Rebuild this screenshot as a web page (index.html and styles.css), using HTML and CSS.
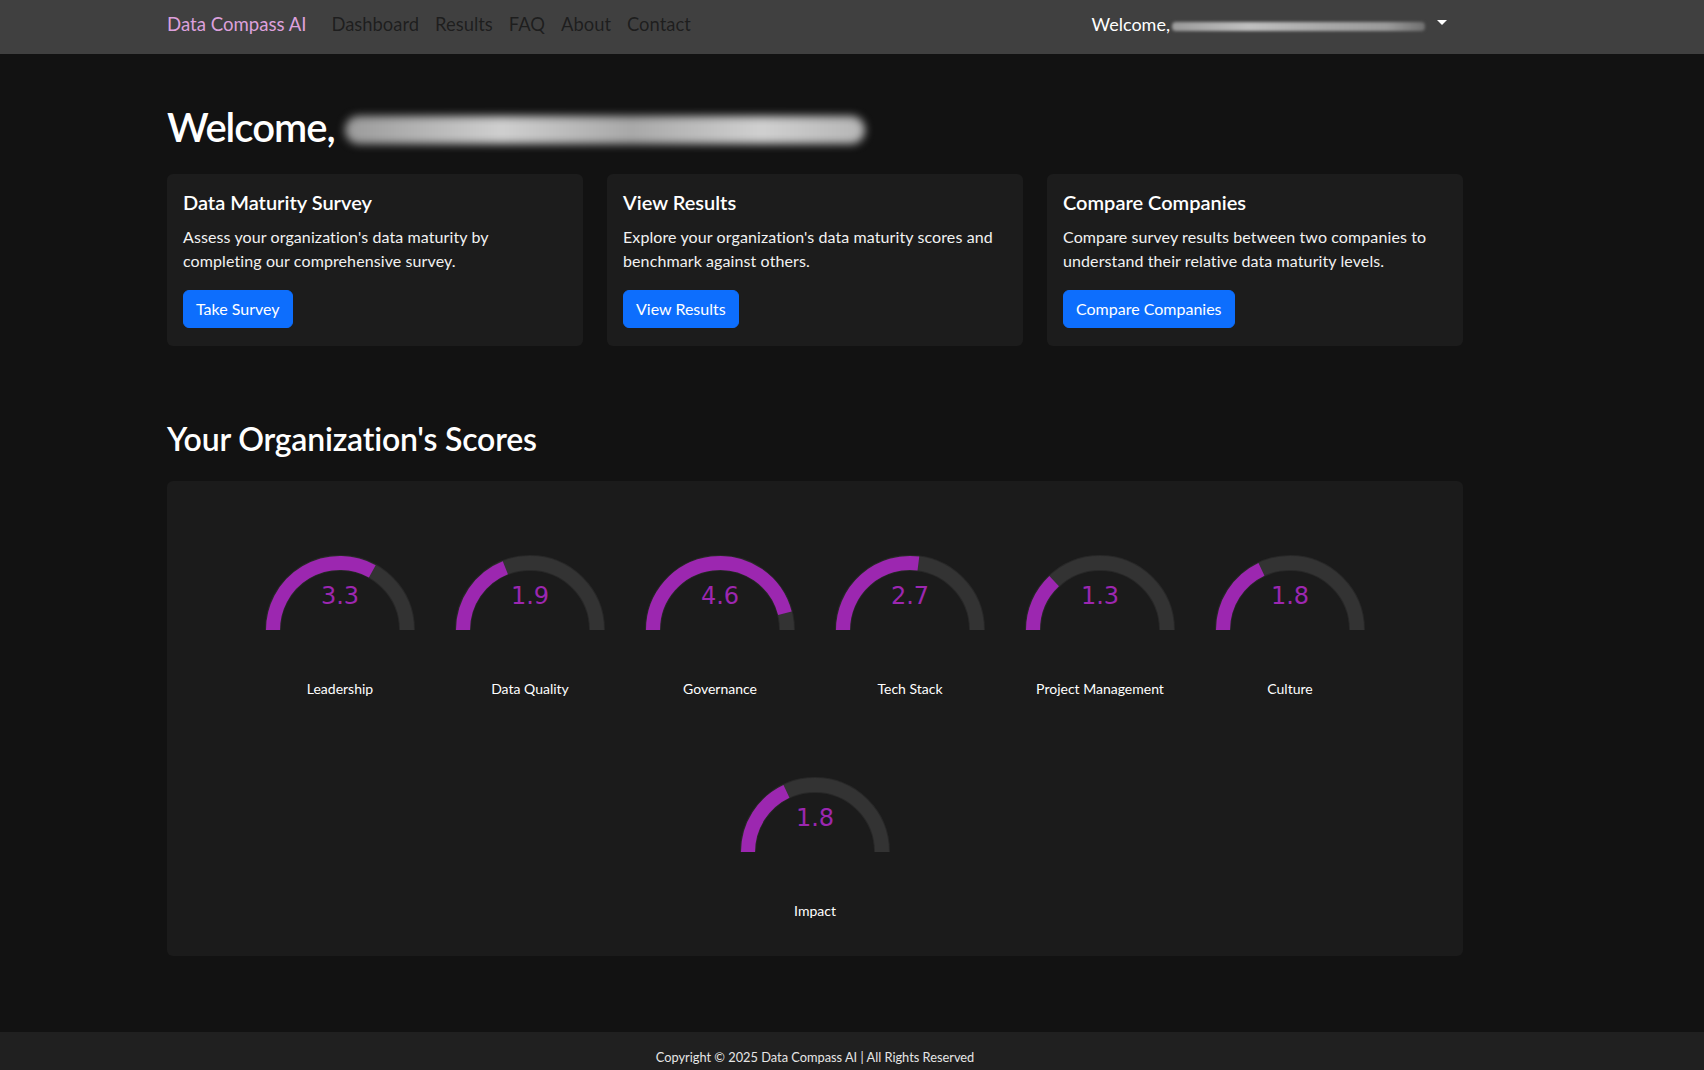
FILE: index.html
```html
<!DOCTYPE html>
<html lang="en">
<head>
<meta charset="utf-8">
<title>Data Compass AI - Dashboard</title>
<link rel="stylesheet" href="styles.css">
</head>
<body>
<nav class="navbar">
  <div class="wrap nav-inner">
    <a class="brand" href="#">Data Compass AI</a>
    <ul class="nav-links">
      <li><a href="#">Dashboard</a></li>
      <li><a href="#">Results</a></li>
      <li><a href="#">FAQ</a></li>
      <li><a href="#">About</a></li>
      <li><a href="#">Contact</a></li>
    </ul>
    <div class="user-menu">
      <span class="welcome">Welcome,</span><span class="redact-sm"></span><span class="caret"></span>
    </div>
  </div>
</nav>

<main class="wrap main">
  <h1 class="page-title">Welcome, <span class="redact-lg"></span></h1>

  <div class="cards">
    <div class="card">
      <h5 class="card-title">Data Maturity Survey</h5>
      <p class="card-text">Assess your organization's data maturity by completing our comprehensive survey.</p>
      <a class="btn" href="#">Take Survey</a>
    </div>
    <div class="card">
      <h5 class="card-title">View Results</h5>
      <p class="card-text">Explore your organization's data maturity scores and benchmark against others.</p>
      <a class="btn" href="#">View Results</a>
    </div>
    <div class="card">
      <h5 class="card-title">Compare Companies</h5>
      <p class="card-text">Compare survey results between two companies to understand their relative data maturity levels.</p>
      <a class="btn" href="#">Compare Companies</a>
    </div>
  </div>

  <h2 class="section-title">Your Organization's Scores</h2>

  <div class="scores">
    <div class="gauge">
      <svg viewBox="0 0 150 80" width="150" height="80">
        <path class="g-shadow" d="M 8 77 A 67 67 0 0 1 142 77"/>
        <path class="g-track" d="M 8 77 A 67 67 0 0 1 142 77"/>
        <path class="g-value" d="M 8 77 A 67 67 0 0 1 107.28 18.29"/>
        <text class="g-text" x="75" y="51">3.3</text>
      </svg>
      <div class="g-label">Leadership</div>
    </div>
    <div class="gauge">
      <svg viewBox="0 0 150 80" width="150" height="80">
        <path class="g-shadow" d="M 8 77 A 67 67 0 0 1 142 77"/>
        <path class="g-track" d="M 8 77 A 67 67 0 0 1 142 77"/>
        <path class="g-value" d="M 8 77 A 67 67 0 0 1 50.34 14.70"/>
        <text class="g-text" x="75" y="51">1.9</text>
      </svg>
      <div class="g-label">Data Quality</div>
    </div>
    <div class="gauge">
      <svg viewBox="0 0 150 80" width="150" height="80">
        <path class="g-shadow" d="M 8 77 A 67 67 0 0 1 142 77"/>
        <path class="g-track" d="M 8 77 A 67 67 0 0 1 142 77"/>
        <path class="g-value" d="M 8 77 A 67 67 0 0 1 139.90 60.34"/>
        <text class="g-text" x="75" y="51">4.6</text>
      </svg>
      <div class="g-label">Governance</div>
    </div>
    <div class="gauge">
      <svg viewBox="0 0 150 80" width="150" height="80">
        <path class="g-shadow" d="M 8 77 A 67 67 0 0 1 142 77"/>
        <path class="g-track" d="M 8 77 A 67 67 0 0 1 142 77"/>
        <path class="g-value" d="M 8 77 A 67 67 0 0 1 83.40 10.53"/>
        <text class="g-text" x="75" y="51">2.7</text>
      </svg>
      <div class="g-label">Tech Stack</div>
    </div>
    <div class="gauge">
      <svg viewBox="0 0 150 80" width="150" height="80">
        <path class="g-shadow" d="M 8 77 A 67 67 0 0 1 142 77"/>
        <path class="g-track" d="M 8 77 A 67 67 0 0 1 142 77"/>
        <path class="g-value" d="M 8 77 A 67 67 0 0 1 29.14 28.16"/>
        <text class="g-text" x="75" y="51">1.3</text>
      </svg>
      <div class="g-label">Project Management</div>
    </div>
    <div class="gauge">
      <svg viewBox="0 0 150 80" width="150" height="80">
        <path class="g-shadow" d="M 8 77 A 67 67 0 0 1 142 77"/>
        <path class="g-track" d="M 8 77 A 67 67 0 0 1 142 77"/>
        <path class="g-value" d="M 8 77 A 67 67 0 0 1 46.47 16.38"/>
        <text class="g-text" x="75" y="51">1.8</text>
      </svg>
      <div class="g-label">Culture</div>
    </div>
    <div class="gauge">
      <svg viewBox="0 0 150 80" width="150" height="80">
        <path class="g-shadow" d="M 8 77 A 67 67 0 0 1 142 77"/>
        <path class="g-track" d="M 8 77 A 67 67 0 0 1 142 77"/>
        <path class="g-value" d="M 8 77 A 67 67 0 0 1 46.47 16.38"/>
        <text class="g-text" x="75" y="51">1.8</text>
      </svg>
      <div class="g-label">Impact</div>
    </div>
  </div>
</main>

<footer class="footer">
  <div class="wrap footer-inner">Copyright © 2025 Data Compass AI | All Rights Reserved</div>
</footer>
</body>
</html>
```

FILE: styles.css
```css
* { box-sizing: border-box; }

body {
  margin: 0;
  background: #121212;
  color: #fff;
  font-family: "Lato", "Liberation Sans", sans-serif;
  font-size: 16px;
  line-height: 1.5;
}

a { text-decoration: none; }

.wrap {
  width: 1296px;
  margin-left: 167px;
}

/* Navbar */
.navbar {
  background: #404040;
  height: 54px;
}
.nav-inner {
  display: flex;
  align-items: center;
  height: 48px;
}
.brand {
  color: #dda0dd;
  font-size: 18.6px;
  line-height: 30px;
  margin-right: 17px;
}
.nav-links {
  display: flex;
  list-style: none;
  margin: 0;
  padding: 0;
}
.nav-links a {
  display: block;
  padding: 0 8px;
  color: rgba(0, 0, 0, 0.55);
  font-size: 18.4px;
  line-height: 30px;
}
.user-menu {
  margin-left: auto;
  margin-right: 16px;
  display: flex;
  align-items: center;
  font-size: 18px;
}
.welcome { color: #fff; }
.redact-sm {
  display: inline-block;
  width: 253px;
  height: 9px;
  margin-left: 2px;
  margin-top: 4px;
  background: linear-gradient(90deg, #9a9a9a, #c0c0c0 30%, #a8a8a8 60%, #9a9a9a 85%, #6f6f6f);
  filter: blur(1.5px);
  border-radius: 4px;
}
.caret {
  display: inline-block;
  margin-left: 12px;
  margin-top: -4px;
  border-top: 5px solid #fff;
  border-left: 5px solid transparent;
  border-right: 5px solid transparent;
}

/* Main */
.main {
  padding-top: 49px;
  padding-bottom: 76px;
}
.page-title {
  margin: 0 0 23px;
  font-size: 40px;
  line-height: 48px;
  font-weight: 600;
  letter-spacing: -1px;
  display: flex;
  align-items: center;
  gap: 10px;
}
.redact-lg {
  display: inline-block;
  width: 520px;
  height: 28px;
  margin-top: 6px;
  background: linear-gradient(90deg, #9a9a9a, #cfcfcf 30%, #a8a8a8 55%, #d0d0d0 80%, #b5b5b5);
  filter: blur(4px);
  border-radius: 14px;
}

.cards {
  display: grid;
  grid-template-columns: repeat(3, 1fr);
  gap: 24px;
}
.card {
  background: #1c1c1c;
  border-radius: 6px;
  padding: 16px 16px 18px;
}
.card-title {
  margin: 0 0 11px;
  font-size: 20px;
  line-height: 24px;
  font-weight: 600;
}
.card-text {
  margin: 0 0 17px;
  color: #f2f2f2;
  letter-spacing: 0.1px;
}
.btn {
  display: inline-block;
  background: #0d6efd;
  color: #fff;
  border: 1px solid #0d6efd;
  border-radius: 6px;
  padding: 6px 12px;
  font-size: 16px;
  line-height: 24px;
}

.section-title {
  margin: 74px 0 23px;
  font-size: 32px;
  line-height: 38px;
  font-weight: 600;
  letter-spacing: -0.2px;
}

.scores {
  background: #1b1b1b;
  border-radius: 6px;
  padding: 72px 24px 35px;
  display: flex;
  flex-wrap: wrap;
  justify-content: center;
  row-gap: 76px;
}
.gauge {
  width: 190px;
  display: flex;
  flex-direction: column;
  align-items: center;
}
.gauge svg { display: block; }
.g-shadow {
  fill: none;
  stroke: #282828;
  stroke-width: 16;
}
.g-track {
  fill: none;
  stroke: #333333;
  stroke-width: 14;
}
.g-value {
  fill: none;
  stroke: #9c27b0;
  stroke-width: 14;
}
.g-text {
  fill: #9c27b0;
  font-family: "DejaVu Sans", Verdana, sans-serif;
  font-size: 24px;
  text-anchor: middle;
}
.g-label {
  margin-top: 45px;
  font-size: 14px;
  line-height: 21px;
  color: #fff;
}

/* Footer */
.footer {
  background: #202020;
  padding: 15px 0 16px;
}
.footer-inner {
  text-align: center;
  font-size: 12.8px;
  line-height: 21px;
  color: #e6e6e6;
}
```
